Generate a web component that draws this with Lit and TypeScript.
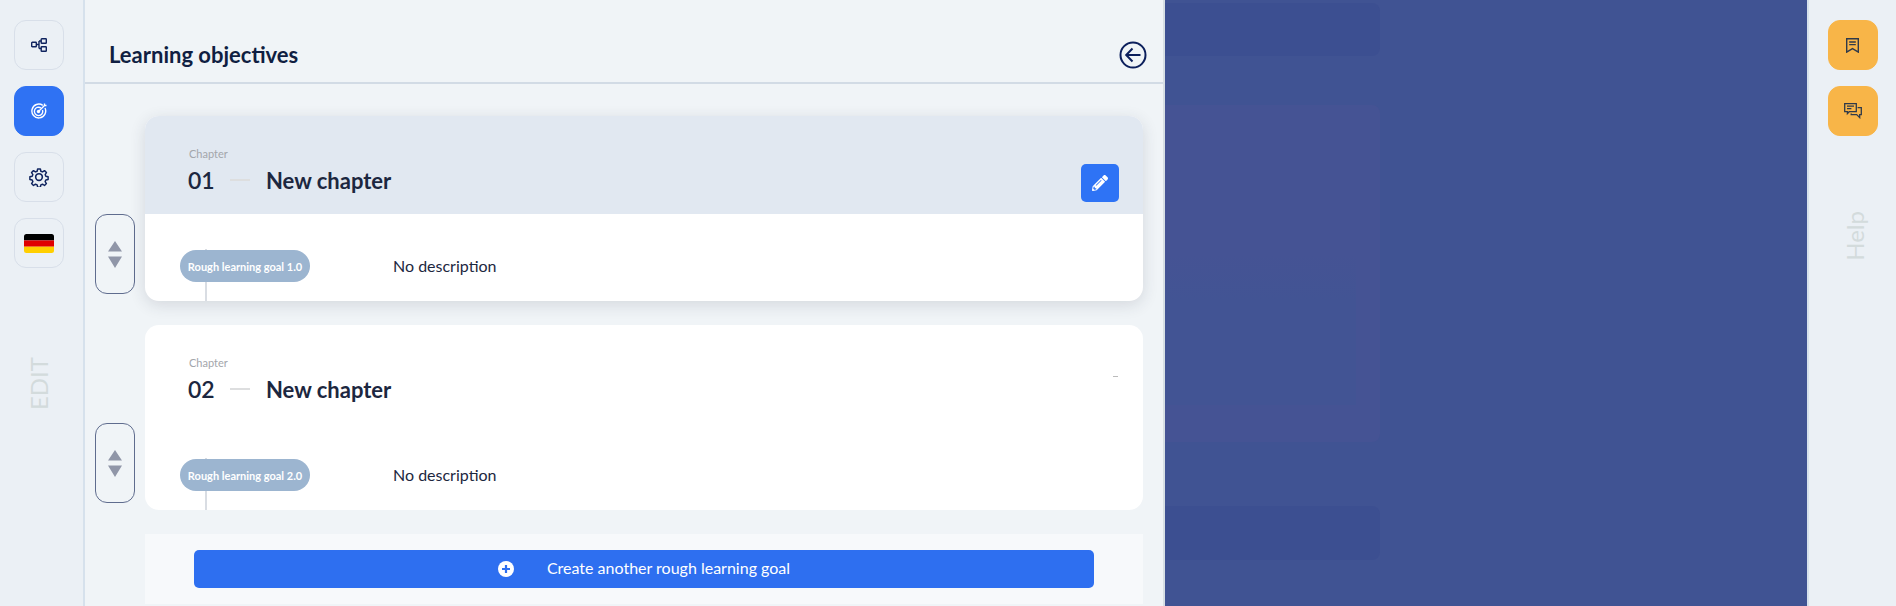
import { LitElement, html, css, svg } from "lit";
import { customElement } from "lit/decorators.js";

const sitemap = svg`<svg width="16" height="14" viewBox="0 0 16 14" fill="none" stroke="#10245f" stroke-width="1.4"><rect x=".7" y="4.2" width="4.6" height="4.6" rx=".6"/><rect x="10.2" y=".7" width="5.1" height="4.6" rx=".6"/><rect x="10.2" y="8.7" width="5.1" height="4.6" rx=".6"/><path d="M5.3 6.5h2.7M8 3v7.5M8 3h2.2M8 10.5h2.2"/></svg>`;
const target = svg`<svg width="16" height="16" viewBox="0 0 16 16" fill="none" stroke="#fff" stroke-width="1.4"><path d="M11.8 2.4A6.9 6.9 0 1 0 14 5"/><path d="M10 5A4.2 4.2 0 1 0 11.5 7"/><circle cx="7.5" cy="8.5" r="1.7" fill="#fff" stroke="none"/><path d="M7.5 8.5 13.5 2.5M13.5.5v2h2"/></svg>`;
const gear = svg`<svg width="20" height="20" viewBox="0 0 24 24" fill="none" stroke="#10245f" stroke-width="1.9" stroke-linejoin="round"><circle cx="12" cy="12" r="4"/><path d="M10.2 1.5h3.6l.6 3 2.2.9 2.6-1.7 2.5 2.5-1.7 2.6.9 2.2 3 .6v3.6l-3 .6-.9 2.2 1.7 2.6-2.5 2.5-2.6-1.7-2.2.9-.6 3h-3.6l-.6-3-2.2-.9-2.6 1.7-2.5-2.5 1.7-2.6-.9-2.2-3-.6v-3.6l3-.6.9-2.2-1.7-2.6 2.5-2.5 2.6 1.7 2.2-.9z" transform="translate(12 12) scale(.92) translate(-12 -12)"/></svg>`;
const flag = svg`<svg width="30" height="19" viewBox="0 0 30 19"><defs><clipPath id="fc"><rect width="30" height="19" rx="2.5"/></clipPath></defs><g clip-path="url(#fc)"><rect width="30" height="6.4" fill="#000"/><rect y="6.4" width="30" height="6.3" fill="#e00000"/><rect y="12.7" width="30" height="6.3" fill="#ffcf00"/></g></svg>`;
const back = svg`<svg width="28" height="28" viewBox="0 0 28 28" fill="none" stroke="#0c1f5c" stroke-width="2"><circle cx="14" cy="14" r="12.5"/><path d="M21.5 14H7.5M13.5 7.5 7.2 14l6.3 6.5"/></svg>`;
const pencil = svg`<svg width="16" height="16" viewBox="0 0 512 512" fill="#fff"><path d="M497.9 142.1l-46.1 46.1c-4.7 4.7-12.3 4.7-17 0l-111-111c-4.7-4.7-4.7-12.3 0-17l46.1-46.1c18.7-18.7 49.1-18.7 67.9 0l60.1 60.1c18.8 18.7 18.8 49.1 0 67.9zM284.2 99.8L21.6 362.4.4 483.9c-2.9 16.4 11.4 30.6 27.8 27.8l121.5-21.3 262.6-262.6c4.7-4.7 4.7-12.3 0-17l-111-111c-4.8-4.7-12.4-4.7-17.1 0zM124.1 339.9c-5.5-5.5-5.5-14.3 0-19.8l154-154c5.5-5.5 14.3-5.5 19.8 0s5.5 14.3 0 19.8l-154 154c-5.5 5.5-14.3 5.5-19.8 0zM88 424h48v36.3l-64.5 11.3-31.1-31.1L51.7 376H88v48z"/></svg>`;
const plus = svg`<svg width="16" height="16" viewBox="0 0 16 16"><circle cx="8" cy="8" r="8" fill="#fff"/><path d="M8 4v8M4 8h8" stroke="#2e6ff0" stroke-width="2.2"/></svg>`;
const bookmark = svg`<svg width="13" height="15" viewBox="0 0 13 15" fill="none" stroke="#2f3a4a" stroke-width="1.4"><path d="M.7.7h11.6v13.4L6.5 10.6.7 14.1z"/><path d="M3.2 4h6.6M3.2 6.6h6.6"/></svg>`;
const chat = svg`<svg width="18" height="16" viewBox="0 0 18 16" fill="none" stroke="#2f3a4a" stroke-width="1.3"><path d="M.7.7h11.6v8H5.2L3.4 10.6V8.7H.7z"/><path d="M3 3.2h7M3 5.6h4.4"/><path d="M13.6 4.6h3.7v7h-1.6v3l-3-3H7.2v-1.2"/></svg>`;
const arrows = svg`<svg width="14" height="27" viewBox="0 0 14 27" fill="#9096a8"><path d="M7 0 14 10.5H0zM0 15.5h14l-7 11.5z"/></svg>`;

@customElement("app-root")
export class AppRoot extends LitElement {
  static styles = css`
    :host { display: block; width: 1896px; height: 606px; overflow: hidden; font-family: "Lato", sans-serif; color: #1c2740; }
    .page { display: flex; height: 606px; }
    .rail { flex: none; width: 78px; padding: 20px 5px 0 0; background: #ebf0f5; border-right: 2px solid #d6e1ec; display: flex; flex-direction: column; align-items: center; }
    .rail.right { width: 87px; padding: 20px 0 0; border-right: 0; border-left: 2px solid #d6e1ec; }
    .tools { display: flex; flex-direction: column; gap: 16px; }
    .tool { width: 50px; height: 50px; box-sizing: border-box; border: 1px solid #d8dfe9; border-radius: 12px; display: flex; align-items: center; justify-content: center; }
    .tool.on { background: #2f72f3; border-color: #2f72f3; }
    .tool.help { background: #f8b548; border-color: #f8b548; }
    .vert { writing-mode: vertical-rl; transform: rotate(180deg); font-size: 24px; font-weight: 400; color: #d3dbdc; line-height: 26px; }
    .edit { margin-top: 89px; }
    .helptxt { margin-top: 75px; margin-left: 4px; }
    .panel { flex: none; width: 1078px; background: #f0f4f7; border-right: 2px solid #d7dfe4; display: flex; flex-direction: column; }
    .head { flex: none; height: 70px; padding: 0 16px 12px 24px; border-bottom: 2px solid #d2dbe5; display: flex; align-items: flex-end; justify-content: space-between; }
    .title { font-size: 22px; font-weight: 700; color: #101f42; line-height: 28px; margin-bottom: 1px; }
    .backicon { display: flex; margin-bottom: 1px; }
    .rows { padding: 32px 20px 0 10px; display: flex; flex-direction: column; gap: 24px; }
    .row { display: flex; align-items: flex-end; gap: 10px; }
    .handle { flex: none; width: 40px; height: 80px; box-sizing: border-box; border: 1px solid #5f6c8e; border-radius: 12px; margin-bottom: 7px; display: flex; align-items: center; justify-content: center; }
    .card { flex: 1; height: 185px; border-radius: 14px; overflow: hidden; background: #fff; display: flex; flex-direction: column; }
    .card.active { box-shadow: 0 4px 16px rgba(40, 50, 70, 0.14); }
    .chead { flex: none; height: 98px; box-sizing: border-box; padding: 31px 24px 0 43px; display: flex; justify-content: space-between; }
    .card.active .chead { background: #e1e8f1; }
    .label { font-size: 11px; color: #a3a6ab; line-height: 14px; margin-left: 1px; }
    .line { display: flex; align-items: center; height: 28px; margin-top: 5px; }
    .num { font-size: 23px; font-weight: 600; color: #1c2740; width: 42px; }
    .dash { width: 20px; height: 2px; background: #dddedf; margin-right: 16px; }
    .name { font-size: 22px; font-weight: 700; color: #1c2740; }
    .editbtn { align-self: flex-start; margin-top: 17px; width: 38px; height: 38px; border-radius: 5px; background: #2e73f5; display: flex; align-items: center; justify-content: center; }
    .stub { align-self: flex-start; width: 5px; height: 1px; margin: 20px 1px 0 0; background: #bbb; }
    .cbody { flex: 1; position: relative; display: flex; align-items: flex-start; padding: 36px 0 0 35px; box-sizing: border-box; }
    .vline { position: absolute; left: 60px; top: 35px; bottom: 0; width: 2px; background: #d9dde3; }
    .pill { position: relative; flex: none; width: 130px; height: 32px; border-radius: 16px; background: #9cb5d0; color: #fff; font-size: 11px; font-weight: 700; display: flex; align-items: center; justify-content: center; white-space: nowrap; }
    .desc { margin-left: 83px; font-size: 16px; line-height: 32px; color: #1c2740; }
    .addwrap { margin: 24px 20px 0 60px; height: 70px; background: #f7f9fb; padding: 16px 49px; box-sizing: border-box; }
    .add { height: 38px; border-radius: 5px; background: #2e6ff0; color: #fff; font-size: 16px; line-height: 36px; display: flex; align-items: flex-start; justify-content: center; gap: 33px; }
    .add svg { flex: none; margin-top: 11px; }
    .back { flex: 1; background: #405393; padding-top: 3px; display: flex; flex-direction: column; }
    .b1, .b3 { width: 215px; background: #3c4f91; border-radius: 0 8px 8px 0; }
    .b1 { height: 53px; }
    .b2 { width: 215px; height: 337px; margin-top: 49px; background: #455394; border-radius: 0 8px 8px 0; padding-top: 150px; box-sizing: border-box; }
    .b2in { width: 191px; height: 150px; background: linear-gradient(#455394, #425494 30%); }
    .b3 { height: 54px; margin-top: 64px; }
  `;

  private renderCard(n: string, goal: string, active: boolean) {
    return html`<div class="row">
      <div class="handle">${arrows}</div>
      <div class="card ${active ? "active" : ""}">
        <div class="chead">
          <div>
            <div class="label">Chapter</div>
            <div class="line"><span class="num">${n}</span><span class="dash"></span><span class="name">New chapter</span></div>
          </div>
          ${active ? html`<div class="editbtn">${pencil}</div>` : html`<div class="stub"></div>`}
        </div>
        <div class="cbody">
          <div class="vline"></div>
          <div class="pill">${goal}</div>
          <div class="desc">No description</div>
        </div>
      </div>
    </div>`;
  }

  render() {
    return html`<div class="page">
      <aside class="rail">
        <div class="tools">
          <div class="tool">${sitemap}</div>
          <div class="tool on">${target}</div>
          <div class="tool">${gear}</div>
          <div class="tool">${flag}</div>
        </div>
        <div class="vert edit">EDIT</div>
      </aside>
      <main class="panel">
        <header class="head"><div class="title">Learning objectives</div><div class="backicon">${back}</div></header>
        <div class="rows">
          ${this.renderCard("01", "Rough learning goal 1.0", true)}
          ${this.renderCard("02", "Rough learning goal 2.0", false)}
        </div>
        <div class="addwrap"><div class="add">${plus}<span>Create another rough learning goal</span></div></div>
      </main>
      <section class="back"><div class="b1"></div><div class="b2"><div class="b2in"></div></div><div class="b3"></div></section>
      <aside class="rail right">
        <div class="tools">
          <div class="tool help">${bookmark}</div>
          <div class="tool help">${chat}</div>
        </div>
        <div class="vert helptxt">Help</div>
      </aside>
    </div>`;
  }
}
